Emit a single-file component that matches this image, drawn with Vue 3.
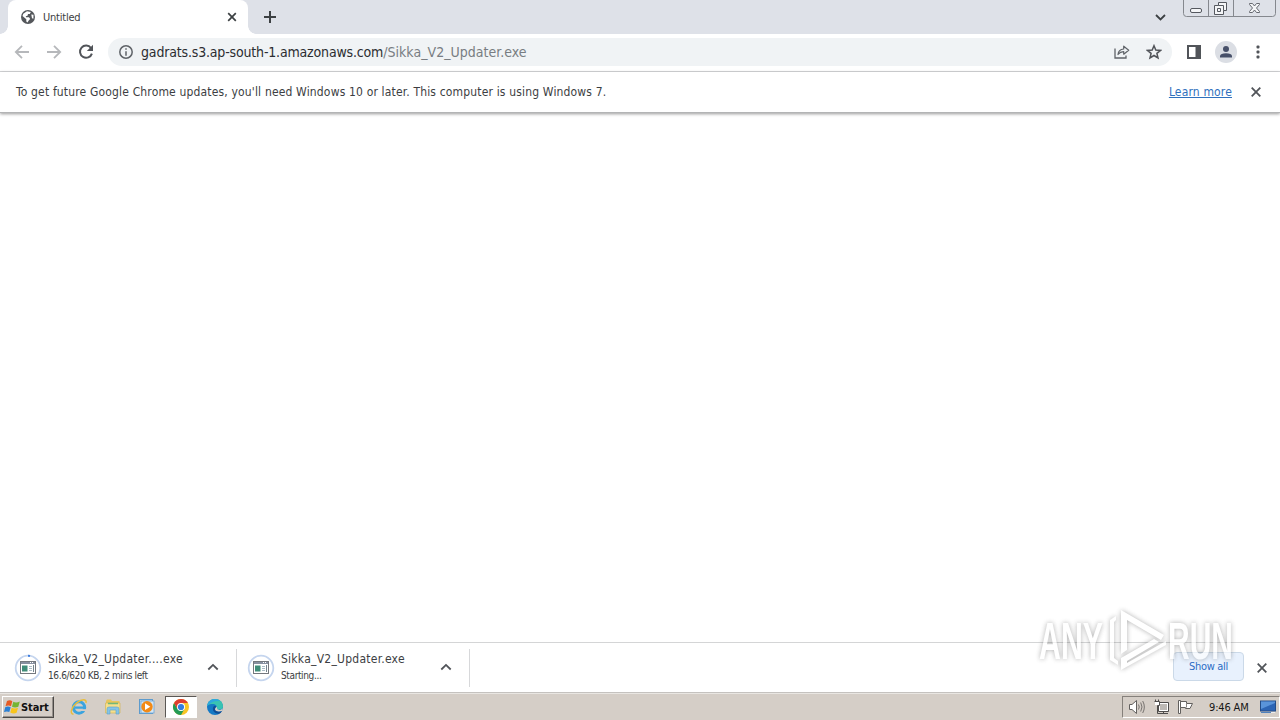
<template>
    <div class="screen">
        <header class="tab-strip">
            <div class="tab">
                <svg class="globe" width="14" height="14" viewBox="0 0 14 14">
                    <circle cx="7" cy="7" r="7" fill="#54575b" />
                    <path d="M6 1.3 9.8 2 8.8 4H7L6.5 5.7 4.8 6.2 5 7.3H8L9.2 9 7.7 10.5 6.5 12.6 5.3 11.4V9.3L1.5 6 2.3 3.7Z" fill="#fff" />
                    <path d="M10.3 4.5 12.5 4.8 12.4 8.8 11 8.2Z" fill="#fff" />
                </svg>
                <span class="tab-title">Untitled</span>
                <svg class="tab-close" width="10" height="10" viewBox="0 0 10 10">
                    <path d="M1.2 1.2 8.8 8.8M8.8 1.2 1.2 8.8" stroke="#3c4043" stroke-width="1.7" />
                </svg>
            </div>
            <svg class="new-tab" width="12" height="12" viewBox="0 0 12 12">
                <path d="M6 0V12M0 6H12" stroke="#3c4043" stroke-width="2" />
            </svg>
            <svg class="tab-search" width="11" height="7" viewBox="0 0 11 7">
                <path d="M1 1 5.5 5.4 10 1" fill="none" stroke="#3c4043" stroke-width="1.8" />
            </svg>
            <div class="window-btns">
                <svg width="93" height="17" viewBox="0 0 93 17">
                    <path d="M.5 0V13.5Q.5 16.5 3.5 16.5H89.5Q92.5 16.5 92.5 13.5V0M25.5 0V16.5M50.5 0V16.5" fill="none" stroke="#85888e" />
                    <rect x="7.5" y="8.5" width="11" height="4" rx="1.5" fill="#f4f5f7" stroke="#55585f" />
                    <path d="M35.5 2.5H43.5V10.5H40.5V14.5H31.5V5.5H35.5Z" fill="#f4f5f7" stroke="#55585f" />
                    <path d="M35.5 5.5H40.5V10.5M34.5 8.5H37.5V11.5H34.5Z" fill="none" stroke="#55585f" />
                    <path d="M66.5 3.5H69.5L71.5 6 73.5 3.5H76.5V4.5L73.5 8 76.5 11.5V12.5H73.5L71.5 10 69.5 12.5H66.5V11.5L69.5 8 66.5 4.5Z" fill="#f4f5f7" stroke="#666970" />
                </svg>
            </div>
        </header>

        <div class="toolbar">
            <svg class="nav-btn" width="16" height="16" viewBox="0 0 16 16">
                <path d="M15 8H2M8 1.8 1.8 8 8 14.2" fill="none" stroke="#b6b8bb" stroke-width="1.8" />
            </svg>
            <svg class="nav-btn" width="16" height="16" viewBox="0 0 16 16">
                <path d="M1 8H14M8 1.8 14.2 8 8 14.2" fill="none" stroke="#b6b8bb" stroke-width="1.8" />
            </svg>
            <svg class="nav-btn" width="16" height="16" viewBox="0 0 16 16">
                <path d="M13 4A6.1 6.1 0 1 0 13.9 9.6" fill="none" stroke="#515459" stroke-width="2" />
                <path d="M15 .8V7H8.8Z" fill="#515459" />
            </svg>
            <div class="omnibox">
                <svg class="info" width="14" height="14" viewBox="0 0 14 14">
                    <circle cx="7" cy="7" r="6.2" fill="none" stroke="#5f6368" stroke-width="1.5" />
                    <path d="M7 3.2V4.8M7 6.2V10.7" stroke="#5f6368" stroke-width="1.5" />
                </svg>
                <span class="url"><span class="host">gadrats.s3.ap-south-1.amazonaws.com</span><span class="path">/Sikka_V2_Updater.exe</span></span>
                <svg class="share" width="16" height="14" viewBox="0 0 16 14">
                    <path d="M1 3.5V13H12V10.5" fill="none" stroke="#5f6368" stroke-width="1.3" />
                    <path d="M4 9.5C4.3 6 6.5 4.2 9.7 4V1.2L14.7 5.3 9.7 9.2V6.6C7.3 6.7 5.4 7.6 4 9.5Z" fill="none" stroke="#5f6368" stroke-width="1.2" stroke-linejoin="round" />
                </svg>
                <svg class="star" width="16" height="16" viewBox="0 0 16 16">
                    <path d="M8 1.7 9.8 6 14.5 6.4 10.9 9.4 12 14 8 11.5 4 14 5.1 9.4 1.5 6.4 6.2 6Z" fill="none" stroke="#515459" stroke-width="1.5" />
                </svg>
            </div>
            <svg class="side-panel" width="14" height="14" viewBox="0 0 14 14">
                <rect x="1" y="1" width="12" height="12" fill="#fff" stroke="#515459" stroke-width="2" />
                <rect x="8.5" y="1" width="5" height="12" fill="#515459" />
            </svg>
            <svg class="avatar" width="22" height="22" viewBox="0 0 22 22">
                <circle cx="11" cy="11" r="11" fill="#dbdee4" />
                <circle cx="11" cy="8" r="3" fill="#475069" />
                <path d="M5 16.5V15Q5.5 12.3 11 12.2 16.5 12.3 17 15V16.5Z" fill="#475069" />
            </svg>
            <svg class="kebab" width="4" height="14" viewBox="0 0 4 14">
                <rect v-for="y in [.5, 5.5, 10.5]" :key="y" x=".5" :y="y" width="3" height="3" rx="1" fill="#515459" />
            </svg>
        </div>

        <div class="infobar">
            <span class="infobar-text">To get future Google Chrome updates, you'll need Windows 10 or later. This computer is using Windows 7.</span>
            <a class="learn-more">Learn more</a>
            <svg width="10" height="10" viewBox="0 0 10 10">
                <path d="M.7 .7 9.3 9.3M9.3 .7 .7 9.3" stroke="#515459" stroke-width="1.8" />
            </svg>
        </div>

        <main class="page"></main>

        <div class="shelf">
            <div v-for="item in downloads" :key="item.name" class="download">
                <svg class="file-icon" width="28" height="28" viewBox="0 0 28 28">
                    <circle cx="14" cy="14" r="12.3" fill="#fff" stroke="#c5d5ee" stroke-width="1.8" />
                    <path v-if="item.started" d="M14 1.7A12.3 12.3 0 0 1 16 1.9" fill="none" stroke="#3f7fe0" stroke-width="2" />
                    <rect x="6.5" y="7.5" width="15" height="12" fill="#fff" stroke="#74787e" />
                    <path d="M7 9H21" stroke="#8790a0" stroke-width="2" />
                    <path d="M16 8.5H20" stroke="#fff" stroke-dasharray="1 1" />
                    <rect x="8" y="11.5" width="5.5" height="6" fill="#3e8c78" />
                    <path d="M15 12.5H18M15 14.5H18M15 16.5H18" stroke="#a9bbc5" />
                    <path d="M19.5 11V18" stroke="#75858e" />
                </svg>
                <div class="download-text">
                    <div class="file-name">{{ item.name }}</div>
                    <div class="status">{{ item.status }}</div>
                </div>
                <svg class="chevron" width="12" height="8" viewBox="0 0 12 8">
                    <path d="M1.3 6.5 6 1.9 10.7 6.5" fill="none" stroke="#515459" stroke-width="1.8" />
                </svg>
            </div>
            <button class="show-all">Show all</button>
            <svg class="shelf-close" width="10" height="10" viewBox="0 0 10 10">
                <path d="M.7 .7 9.3 9.3M9.3 .7 .7 9.3" stroke="#515459" stroke-width="1.8" />
            </svg>
        </div>

        <footer class="taskbar">
            <div class="start">
                <svg width="17" height="16" viewBox="0 0 17 16">
                    <path d="M3 2Q6 .5 8.3 2.2L7 7.2Q4.5 5.8 1.5 7.2Z" fill="#e75b24" />
                    <path d="M9.3 2.7Q12 4.2 15.8 2.5L14.3 7.8Q11 9.2 8 7.7Z" fill="#75b534" />
                    <path d="M1.2 8.2Q4 6.9 6.7 8.3L5.3 13Q3 11.8 0 13Z" fill="#2c80d4" />
                    <path d="M7.7 8.7Q10.8 10.2 14 8.8L12.6 13.8Q9.5 15.2 6.3 13.5Z" fill="#f8c51c" />
                </svg>
                <span>Start</span>
            </div>
            <div class="quick">
                <div class="task">
                    <svg width="18" height="18" viewBox="0 0 18 18">
                        <circle cx="9" cy="9.5" r="5.7" fill="none" stroke="#3ba4df" stroke-width="3" />
                        <path d="M5 9.6H14" stroke="#3ba4df" stroke-width="2.3" />
                        <path d="M11 11.2H16.5V13H11Z" fill="#d6cec7" />
                        <path d="M3.5 16.2C-.5 16 1 9.5 7 4.7 11.5 1 17 .5 16 5" fill="none" stroke="#e8bd3c" stroke-width="1.5" />
                    </svg>
                </div>
                <div class="task">
                    <svg width="18" height="18" viewBox="0 0 18 18">
                        <path d="M2 3 3 1.5H7L8 3H15.5V6H2Z" fill="#e8c65c" />
                        <path d="M1.5 5H16V15H1.5Z" fill="#f6df8b" stroke="#d4b55a" stroke-width=".7" />
                        <path d="M4 5.5H14" stroke="#71b879" stroke-width="1.5" />
                        <path d="M3 16V11Q3 9 5 9H13Q15 9 15 11V16H12V12H6V16Z" fill="#86c4e6" stroke="#58a1ca" stroke-width=".6" />
                    </svg>
                </div>
                <div class="task">
                    <svg width="18" height="18" viewBox="0 0 18 18">
                        <rect x="1.5" y="1.5" width="13" height="14" fill="#b9d7ee" stroke="#5d9bcd" />
                        <rect x="3" y="3" width="13" height="12" fill="#d4e7f5" stroke="#6ba4d2" stroke-width=".8" />
                        <circle cx="9" cy="8.7" r="5.7" fill="#f28a16" />
                        <path d="M7 5.3 12.3 8.7 7 12.1Z" fill="#fff" />
                    </svg>
                </div>
                <div class="task active">
                    <svg width="18" height="18" viewBox="0 0 18 18">
                        <circle cx="9" cy="9" r="8" fill="#f9c526" />
                        <path d="M9 9 2.07 5A8 8 0 0 1 15.93 5H9Z" fill="#df3e31" />
                        <path d="M2.07 5A8 8 0 0 0 9 17L12.46 11H5.54Z" fill="#239b56" />
                        <path d="M2.07 5 5.54 11 9 9 8 4Z" fill="#df3e31" />
                        <circle cx="9" cy="9" r="4" fill="#fff" />
                        <circle cx="9" cy="9" r="3.1" fill="#347de0" />
                    </svg>
                </div>
                <div class="task">
                    <svg width="18" height="18" viewBox="0 0 18 18">
                        <circle cx="9" cy="9" r="8" fill="#1579c5" />
                        <path d="M1.2 8C2 3 5 1 9 1 14 1 17 4.5 17 8.5 17 11 14 12.5 11 11 11.8 7 8.5 5.5 5.5 6 3.5 6.3 2 7 1.2 8Z" fill="#39c3b2" />
                        <path d="M1.2 8C2 3 5 1 9 1 11 1 13 2 14 3.2 9 2.5 5 4 1.2 8Z" fill="#2da7df" />
                        <path d="M8 8C5.5 10.5 7 15.5 12.5 15.7 14 15.7 15.3 14.5 16 13 13 14 9.5 13.5 9 11.5 8.9 10 10.5 9.5 10 8.5Q9.3 7.3 8 8Z" fill="#0e4d96" />
                        <path d="M9 11.5C8.9 10 10.5 9.5 10.3 8.5 11.5 9.5 10.5 10.8 12 11.5 14 12.5 16 11.5 17 10L16 13C13 14 9.5 13.5 9 11.5Z" fill="#d6cec7" />
                    </svg>
                </div>
            </div>
            <div class="tray">
                <svg width="18" height="16" viewBox="0 0 18 16">
                    <path d="M1.5 5.5H4L8.5 1.5V14.5L4 10.5H1.5Z" fill="#fff" stroke="#62605e" />
                    <path d="M10.5 5.5Q12 8 10.5 10.5M12.7 3.5Q15.3 8 12.7 12.5M14.7 2Q18 8 14.7 14" fill="none" stroke="#777370" />
                </svg>
                <svg width="17" height="16" viewBox="0 0 17 16">
                    <path d="M5.5 3.5H15.5V12.5H5.5ZM7 14.5H15M10.5 12.5V14.5" fill="none" stroke="#4e4c4b" />
                    <rect x="6.5" y="4.5" width="8" height="7" fill="#bdb9b5" stroke="#fff" />
                    <path d="M1.5 2.5H6.5V6.5H4.5V14.5H7M2.5 .5V3M5.5 .5V3" fill="none" stroke="#4e4c4b" />
                    <rect x="2" y="3" width="4" height="3" fill="#fff" />
                </svg>
                <svg width="17" height="16" viewBox="0 0 17 16">
                    <path d="M1.5 1.5H3.5V14.5H1.5Z" fill="#fff" stroke="#62605e" />
                    <path d="M3.5 2.5H9.5V4.5H15.5L13 9.500H8.500V8.500H3.500Z" fill="#fff" stroke="#62605e" />
                    <path d="M9.5 4.500V8.500" stroke="#8a8683" />
                </svg>
                <span class="clock">9:46 AM</span>
                <svg width="16" height="14" viewBox="0 0 16 14">
                    <rect x=".5" y="1" width="15" height="10" fill="#2d65b5" stroke="#244d88" />
                    <path d="M1 1.5H15V3L1 9Z" fill="#5a94da" />
                    <path d="M1 12.5H11" stroke="#4f81bd" />
                    <path d="M11 12.5H15" stroke="#eee" />
                </svg>
            </div>
        </footer>

        <svg class="watermark" width="230" height="90" viewBox="0 0 230 90">
            <g class="mark-text">
                <text x="9" y="59" textLength="64" lengthAdjust="spacingAndGlyphs">ANY</text>
                <text x="138" y="59" textLength="65" lengthAdjust="spacingAndGlyphs">RUN</text>
            </g>
            <g class="mark-play">
                <path d="M80 20 86 16V20L84 22V58L88 61V65L80 60Z" />
                <path d="M91 10 134 35 131 40 97 20V50L91 54Z" />
                <path d="M91 58 124 39 129 42 97 61V63L136 41V45L91 70Z" />
            </g>
        </svg>
    </div>
</template>

<script setup>
import { ref } from 'vue';

const downloads = ref([
    { name: 'Sikka_V2_Updater....exe', status: '16.6/620 KB, 2 mins left', started: true },
    { name: 'Sikka_V2_Updater.exe', status: 'Starting...', started: false },
]);
</script>

<style>
body {
    margin: 0;
    overflow: hidden;
}
</style>

<style scoped>
.screen {
    position: relative;
    display: flex;
    flex-direction: column;
    width: 1280px;
    height: 720px;
    background: #fff;
    color: #3c3e42;
    font-family: 'DejaVu Sans Condensed', 'DejaVu Sans', sans-serif;
    font-stretch: condensed;
    white-space: nowrap;
}

svg {
    display: block;
    flex: none;
}

.tab-strip {
    display: flex;
    flex: none;
    height: 34px;
    background: radial-gradient(circle at 0 0, transparent 7.5px, #fff 8px) 0 26px / 8px 8px no-repeat,
        radial-gradient(circle at 100% 0, transparent 7.5px, #fff 8px) 248px 26px / 8px 8px no-repeat, #dee1e8;
}

.tab {
    display: flex;
    align-items: center;
    box-sizing: border-box;
    width: 240px;
    margin-left: 8px;
    padding: 0 11px 0 13px;
    border-radius: 8px 8px 0 0;
    background: #fff;
}

.tab-title {
    flex: 1;
    margin-left: 8px;
    font-size: 11px;
    letter-spacing: -0.22px;
}

.new-tab {
    margin: 11px 0 0 16px;
}

.tab-search {
    margin: 14px 17px 0 auto;
}

.window-btns {
    width: 93px;
    margin-right: 4px;
}

.toolbar {
    display: flex;
    flex: none;
    align-items: center;
    box-sizing: border-box;
    height: 38px;
    padding: 0 19px 2px 14px;
    border-bottom: 1px solid #d7d8da;
}

.nav-btn {
    margin-right: 16px;
}

.omnibox {
    display: flex;
    align-items: center;
    box-sizing: border-box;
    width: 1064px;
    height: 28px;
    margin-left: -2px;
    padding: 0 10px 0 11px;
    border-radius: 14px;
    background: #f0f3f5;
}

.url {
    flex: 1;
    margin-left: 8px;
    padding-top: 1px;
    font-size: 14px;
}

.host {
    color: #2b2d31;
    letter-spacing: -0.17px;
}

.path {
    color: #787d82;
    letter-spacing: 0.03px;
}

.share {
    margin-right: 16px;
}

.side-panel {
    margin-left: 15px;
}

.avatar {
    margin-left: 14px;
}

.kebab {
    margin-left: 19px;
}

.infobar {
    display: flex;
    flex: none;
    align-items: center;
    box-sizing: border-box;
    height: 41px;
    padding: 0 19px 1px 16px;
    border-bottom: 1px solid #b3b4b5;
    box-shadow: 0 1px 3px rgba(0, 0, 0, 0.4);
    font-size: 12px;
    letter-spacing: 0.163px;
}

.infobar-text {
    flex: 1;
}

.learn-more {
    margin-right: 19px;
    color: #2f70bd;
    text-decoration: underline;
}

.page {
    flex: 1;
}

.shelf {
    display: flex;
    flex: none;
    align-items: center;
    box-sizing: border-box;
    height: 51px;
    padding-right: 13px;
    border-top: 1px solid #d4d5d6;
    border-bottom: 1px solid #c5c2bf;
}

.download {
    display: flex;
    align-items: center;
    box-sizing: border-box;
    width: 237px;
    height: 38px;
    padding: 0 17px 0 14px;
    border-right: 1px solid #d7d8da;
}

.download + .download {
    width: 233px;
    padding-left: 10px;
}

.download-text {
    flex: 1;
    margin-left: 6px;
}

.file-name {
    font-size: 12px;
    line-height: 17px;
    letter-spacing: 0.25px;
}

.status {
    font-size: 10px;
    line-height: 16px;
    letter-spacing: -0.37px;
}

.chevron {
    margin-bottom: 1px;
}

.show-all {
    width: 71px;
    height: 29px;
    margin: 0 0 2px auto;
    padding: 0 0 1px;
    border: 1px solid #cbd9e8;
    border-radius: 4px;
    background: #e8f1fd;
    color: #2c6cc4;
    font-family: inherit;
    font-size: 11px;
    letter-spacing: -0.33px;
}

.shelf-close {
    margin-left: 13px;
}

.taskbar {
    display: flex;
    flex: none;
    align-items: center;
    box-sizing: border-box;
    height: 27px;
    padding: 1px 0 1px 2px;
    border-top: 1px solid #e9e6e2;
    background: #d5cec7;
}

.start {
    display: flex;
    align-items: center;
    box-sizing: border-box;
    width: 52px;
    height: 22px;
    padding-left: 1px;
    border: 1px solid;
    border-color: #fff #4c4946 #4c4946 #fff;
    box-shadow: inset -1px -1px #96918c;
    color: #111;
    font-size: 11px;
    font-weight: bold;
    letter-spacing: -0.1px;
}

.quick {
    display: flex;
    margin-left: 9px;
}

.task {
    display: flex;
    align-items: center;
    justify-content: center;
    box-sizing: border-box;
    width: 32px;
    height: 22px;
    margin-right: 2px;
}

.active {
    border: 1px solid;
    border-color: #5b5855 #fff #fff #5b5855;
    background: #fff;
}

.tray {
    display: flex;
    align-items: center;
    box-sizing: border-box;
    width: 158px;
    height: 22px;
    margin-left: auto;
    padding: 0 3px 0 5px;
    gap: 7px;
    border: 1px solid;
    border-color: #85807b #fff #fff #85807b;
}

.clock {
    flex: 1;
    margin-left: 8px;
    color: #151515;
    font-size: 11px;
    letter-spacing: -0.15px;
}

/* translucent logo floating over the page and the download shelf */
.watermark {
    position: absolute;
    left: 1030px;
    top: 600px;
    overflow: visible;
    opacity: 0.65;
    pointer-events: none;
    filter: drop-shadow(0 0 2.5px rgba(70, 70, 70, 0.65));
}

.mark-text {
    fill: #fff;
    font: bold 51px 'Liberation Sans', sans-serif;
}

.mark-play {
    fill: #fff;
}
</style>
